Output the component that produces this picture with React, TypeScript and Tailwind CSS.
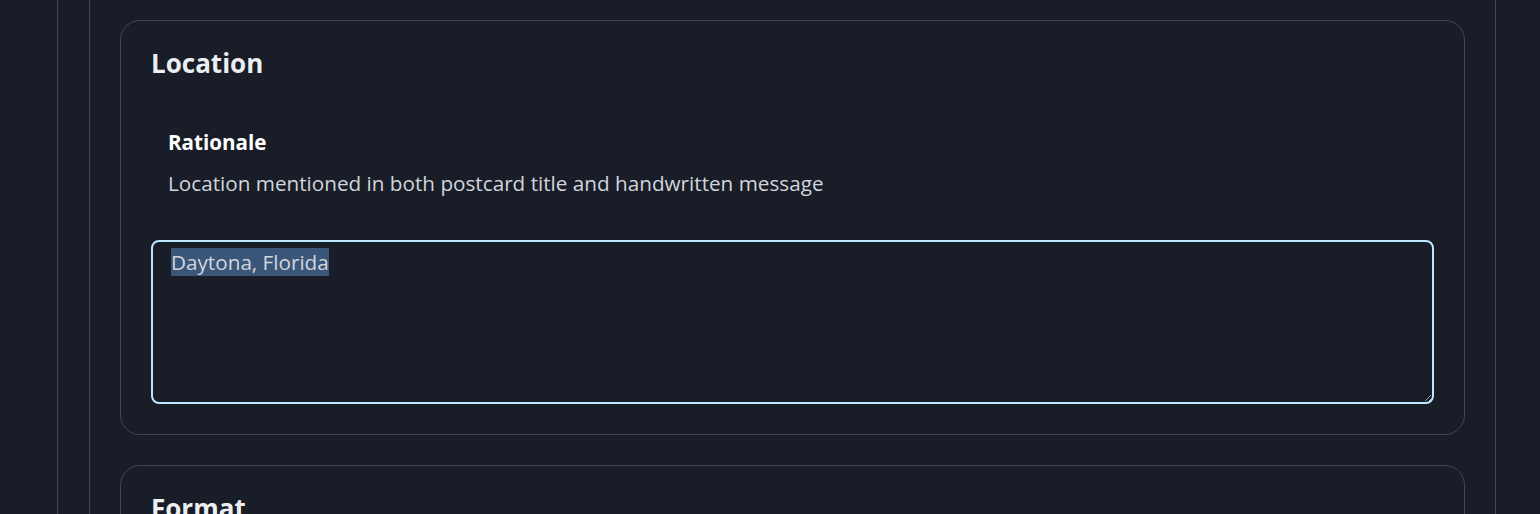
import React, { useEffect, useRef } from "react";

const font = { fontFamily: '"Open Sans", "Noto Sans", sans-serif' };

function FieldCard({
  title,
  rationale,
  value,
  autoSelect,
}: {
  title: string;
  rationale?: string;
  value?: string;
  autoSelect?: boolean;
}) {
  const ref = useRef<HTMLTextAreaElement>(null);

  useEffect(() => {
    if (autoSelect && ref.current) {
      ref.current.focus();
      ref.current.select();
    }
  }, [autoSelect]);

  return (
    <section className="rounded-[20px] border border-[#41454f] px-[30px] pt-[27px] pb-[30px] shrink-0">
      <h2 className="text-[26px] font-bold leading-[30px] text-[#eceef2]">{title}</h2>

      {rationale && (
        <div className="mt-[51px] px-[17px]">
          <h3 className="text-[20.6px] font-bold leading-[26px] text-white">Rationale</h3>
          <p className="mt-[15px] text-[20.7px] leading-[26px] text-[#d2d5dc]">{rationale}</p>
        </div>
      )}

      {value !== undefined && (
        <textarea
          ref={ref}
          defaultValue={value}
          spellCheck={false}
          className="mt-[44px] block h-[164px] w-full rounded-[8px] border-2 border-[#bde7fd] bg-[#181d27] px-[18px] py-[6px] text-[20.7px] leading-[28px] text-[#d2d5dc] outline-none selection:bg-[#3a5679] selection:text-[#d2d5dc]"
          style={font}
        />
      )}
    </section>
  );
}

export default function App() {
  return (
    <div className="h-screen overflow-hidden bg-[#181d27] pl-[57px]" style={font}>
      <div className="h-full border-l border-[#41454f] pl-[31px]">
        <div className="flex h-full w-[1407px] flex-col gap-[30px] border-x border-[#41454f] px-[30px] pt-[20px]">
          <FieldCard
            title="Location"
            rationale="Location mentioned in both postcard title and handwritten message"
            value="Daytona, Florida"
            autoSelect
          />
          <FieldCard title="Format" />
        </div>
      </div>
    </div>
  );
}
